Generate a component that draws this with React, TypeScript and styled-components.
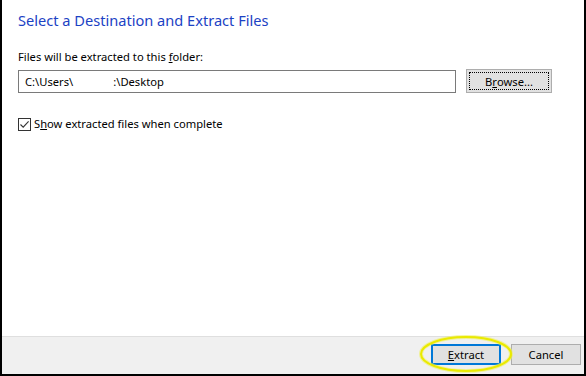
import React from 'react';
import styled, { createGlobalStyle } from 'styled-components';

const GlobalStyle = createGlobalStyle`
  html, body {
    margin: 0;
    padding: 0;
    background: #ffffff;
  }
  * {
    box-sizing: border-box;
  }
`;

const App = () => {
  return (
    <>
      <GlobalStyle />
      <Window>
        <Body>
          <Title>Select a Destination and Extract Files</Title>
          <Label>
            Files will be extracted to this <u>f</u>older:
          </Label>
          <PathRow>
            <PathInput>C:\Users\<Gap />:\Desktop</PathInput>
            <Button $focused>
              B<u>r</u>owse...
            </Button>
          </PathRow>
          <CheckRow>
            <CheckBox>
              <svg width="11" height="11" viewBox="0 0 11 11">
                <path d="M1.5 5.5 L4.2 8.2 L9.6 2.4" fill="none" stroke="#333" strokeWidth="1.1" />
              </svg>
            </CheckBox>
            <span>
              S<u>h</u>ow extracted files when complete
            </span>
          </CheckRow>
        </Body>
        <Footer>
          <ButtonWrap>
            <Button $primary>
              <u>E</u>xtract
            </Button>
            <Highlight viewBox="0 0 96 40">
              <ellipse cx="48" cy="20" rx="45" ry="17" fill="none" stroke="#f0f060" strokeWidth="4" opacity="0.6" />
              <ellipse cx="48" cy="20" rx="45" ry="17" fill="none" stroke="#eaea00" strokeWidth="2" />
            </Highlight>
          </ButtonWrap>
          <Button>Cancel</Button>
        </Footer>
      </Window>
    </>
  );
};

const Window = styled.div`
  width: 586px;
  height: 376px;
  display: flex;
  flex-direction: column;
  border-left: 2px solid #000;
  border-right: 2px solid #000;
  border-bottom: 2px solid #000;
  font-family: 'Noto Sans', 'Liberation Sans', sans-serif;
  font-size: 11.2px;
  color: #000;
`;

const Body = styled.div`
  flex: 1;
  padding: 9px 32px 0 16px;
  display: flex;
  flex-direction: column;
`;

const Title = styled.h1`
  margin: 0;
  font-family: 'Noto Sans', 'Liberation Sans', sans-serif;
  font-weight: 400;
  font-size: 14.6px;
  line-height: 22px;
  color: #1c42c4;
`;

const Label = styled.div`
  margin-top: 18px;
  line-height: 16px;
`;

const PathRow = styled.div`
  display: flex;
  align-items: center;
  gap: 10px;
  margin-top: 4px;
`;

const PathInput = styled.div`
  width: 438px;
  height: 23px;
  border: 1px solid #7a7a7a;
  padding: 0 6px;
  display: flex;
  align-items: center;
  white-space: pre;
`;

const Gap = styled.span`
  display: inline-block;
  width: 40px;
`;

const Button = styled.button<{ $focused?: boolean; $primary?: boolean }>`
  width: ${(p) => (p.$focused ? '86px' : '70px')};
  height: ${(p) => (p.$focused ? '24px' : '21px')};
  padding: 0;
  font-family: 'Noto Sans', 'Liberation Sans', sans-serif;
  font-size: 11.2px;
  color: #000;
  background: #e1e1e1;
  border: ${(p) => (p.$primary ? '2px solid #0078d7' : '1px solid #adadad')};
  outline: ${(p) => (p.$focused ? '1px dotted #000' : 'none')};
  outline-offset: -4px;
  display: flex;
  align-items: center;
  justify-content: center;
`;

const CheckRow = styled.label`
  display: flex;
  align-items: center;
  gap: 3px;
  margin-top: 23px;
  line-height: 16px;
`;

const CheckBox = styled.span`
  width: 13px;
  height: 13px;
  border: 1px solid #333;
  background: #fff;
  display: flex;
  align-items: center;
  justify-content: center;
`;

const Footer = styled.div`
  height: 38px;
  background: #f0f0f0;
  border-top: 1px solid #dfdfdf;
  display: flex;
  align-items: center;
  justify-content: flex-end;
  gap: 10px;
  padding: 0 3px 2px 0;
`;

const ButtonWrap = styled.div`
  position: relative;
`;

const Highlight = styled.svg`
  position: absolute;
  left: -13px;
  top: -10px;
  width: 96px;
  height: 40px;
  pointer-events: none;
  overflow: visible;
`;

export default App;
